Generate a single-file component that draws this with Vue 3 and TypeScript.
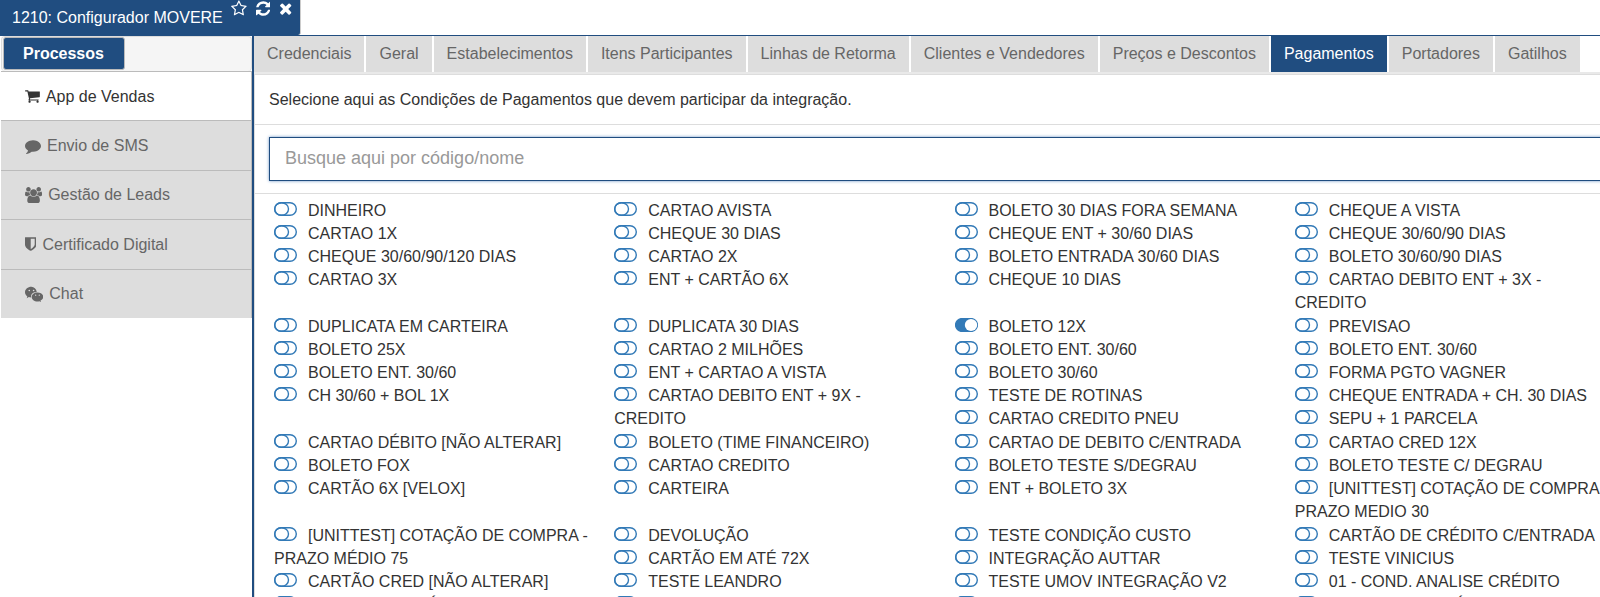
<script setup lang="ts">
import { reactive, ref } from 'vue'

interface Glyph {
  width: number
  path: string
}

interface MenuEntry {
  label: string
  icon: string
}

interface Option {
  name: string
  on: boolean
}

const glyphs: Record<string, Glyph> = {
  star: {
    width: 1664,
    path: 'M1137 532l306 297l-422 62l-189 382l-189 -382l-422 -62l306 -297l-73 -421l378 199l377 -199zM1664 889q0 -22 -26 -48l-363 -354l86 -500q1 -7 1 -20q0 -50 -41 -50q-19 0 -40 12l-449 236l-449 -236q-22 -12 -40 -12q-21 0 -31.5 14.5t-10.5 35.5q0 6 2 20l86 500l-364 354q-25 27 -25 48q0 37 56 46l502 73l225 455q19 41 49 41t49 -41l225 -455l502 -73q56 -9 56 -46z',
  },
  refresh: {
    width: 1536,
    path: 'M1511 480q0 -5 -1 -7q-64 -268 -268 -434.5t-478 -166.5q-146 0 -282.5 55t-243.5 157l-129 -129q-19 -19 -45 -19t-45 19t-19 45v448q0 26 19 45t45 19h448q26 0 45 -19t19 -45t-19 -45l-137 -137q71 -66 161 -102t187 -36q134 0 250 65t186 179q11 17 53 117q8 23 30 23h192q13 0 22.5 -9.5t9.5 -22.5zM1536 1280v-448q0 -26 -19 -45t-45 -19h-448q-26 0 -45 19t-19 45t19 45l138 138q-148 137 -349 137q-134 0 -250 -65t-186 -179q-11 -17 -53 -117q-8 -23 -30 -23h-199q-13 0 -22.5 9.5t-9.5 22.5v7q65 268 270 434.5t480 166.5q146 0 284 -55.5t245 -156.5l130 129q19 19 45 19t45 -19t19 -45z',
  },
  times: {
    width: 1408,
    path: 'M1298 214q0 -40 -28 -68l-136 -136q-28 -28 -68 -28t-68 28l-294 294l-294 -294q-28 -28 -68 -28t-68 28l-136 136q-28 28 -28 68t28 68l294 294l-294 294q-28 28 -28 68t28 68l136 136q28 28 68 28t68 -28l294 -294l294 294q28 28 68 28t68 -28l136 -136q28 -28 28 -68t-28 -68l-294 -294l294 -294q28 -28 28 -68z',
  },
  cart: {
    width: 1664,
    path: 'M640 0q0 -52 -38 -90t-90 -38t-90 38t-38 90t38 90t90 38t90 -38t38 -90zM1536 0q0 -52 -38 -90t-90 -38t-90 38t-38 90t38 90t90 38t90 -38t38 -90zM1664 1088v-512q0 -24 -16.5 -42.5t-40.5 -21.5l-1044 -122q13 -60 13 -70q0 -16 -24 -64h920q26 0 45 -19t19 -45t-19 -45t-45 -19h-1024q-26 0 -45 19t-19 45q0 11 8 31.5t16 36t21.5 40t15.5 29.5l-177 823h-204q-26 0 -45 19t-19 45t19 45t45 19h256q16 0 28.5 -6.5t19.5 -15.5t13 -24.5t8 -26t5.5 -29.5t4.5 -26h1201q26 0 45 -19t19 -45z',
  },
  comment: {
    width: 1792,
    path: 'M1792 640q0 -174 -120 -321.5t-326 -233t-450 -85.5q-70 0 -145 8q-198 -175 -460 -242q-49 -14 -114 -22q-17 -2 -30.5 9t-17.5 29v1q-3 4 -0.5 12t2 10t4.5 9.5l6 9t7 8.5t8 9q7 8 31 34.5t34.5 38t31 39.5t32.5 51t27 59t26 76q-157 89 -247.5 220t-90.5 281q0 130 71 248.5t191 204.5t286 136.5t348 50.5q244 0 450 -85.5t326 -233t120 -321.5z',
  },
  users: {
    width: 1920,
    path: 'M593 640q-162 -5 -265 -128h-134q-82 0 -138 40.5t-56 118.5q0 353 124 353q6 0 43.5 -21t97.5 -42.5t119 -21.5q67 0 133 23q-5 -37 -5 -66q0 -139 81 -256zM1664 3q0 -120 -73 -189.5t-194 -69.5h-874q-121 0 -194 69.5t-73 189.5q0 53 3.5 103.5t14 109t26.5 108.5t43 97.5t62 81t85.5 53.5t111.5 20q10 0 43 -21.5t73 -48t107 -48t135 -21.5t135 21.5t107 48t73 48t43 21.5q61 0 111.5 -20t85.5 -53.5t62 -81t43 -97.5t26.5 -108.5t14 -109t3.5 -103.5zM640 1280q0 -106 -75 -181t-181 -75t-181 75t-75 181t75 181t181 75t181 -75t75 -181zM1344 896q0 -159 -112.5 -271.5t-271.5 -112.5t-271.5 112.5t-112.5 271.5t112.5 271.5t271.5 112.5t271.5 -112.5t112.5 -271.5zM1920 671q0 -78 -56 -118.5t-138 -40.5h-134q-103 123 -265 128q81 117 81 256q0 29 -5 66q66 -23 133 -23q59 0 119 21.5t97.5 42.5t43.5 21q124 0 124 -353zM1792 1280q0 -106 -75 -181t-181 -75t-181 75t-75 181t75 181t181 75t181 -75t75 -181z',
  },
  shield: {
    width: 1280,
    path: 'M1088 576v640h-448v-1137q119 63 213 137q235 184 235 360zM1280 1344v-768q0 -86 -33.5 -170.5t-83 -150t-118 -127.5t-126.5 -103t-121 -77.5t-89.5 -49.5t-42.5 -20q-12 -6 -26 -6t-26 6q-16 7 -42.5 20t-89.5 49.5t-121 77.5t-126.5 103t-118 127.5t-83 150t-33.5 170.5v768q0 26 19 45t45 19h1152q26 0 45 -19t19 -45z',
  },
  chat: {
    width: 2048,
    path: 'M720 1440C320 1440 0 1170 0 830C0 640 100 490 260 370L195 165L425 290Q540 255 690 250Q660 330 680 430C720 690 990 880 1320 870C1260 1200 1010 1440 720 1440zM480 1130a92 92 0 1 0 0 -184a92 92 0 1 0 0 184zM965 1130a92 92 0 1 0 0 -184a92 92 0 1 0 0 184zM1400 810C1030 810 750 590 750 310C750 20 1030 -190 1400 -190Q1510 -190 1605 -160L1790 -256L1740 -97C1930 20 2048 150 2048 310C2048 590 1770 810 1400 810zM1195 575a72 72 0 1 0 0 -144a72 72 0 1 0 0 144zM1600 575a72 72 0 1 0 0 -144a72 72 0 1 0 0 144z',
  },
}

const windowActions = [
  { icon: 'star', label: 'Favoritar' },
  { icon: 'refresh', label: 'Atualizar' },
  { icon: 'times', label: 'Fechar' },
]

const menu: MenuEntry[] = [
  { label: 'App de Vendas', icon: 'cart' },
  { label: 'Envio de SMS', icon: 'comment' },
  { label: 'Gestão de Leads', icon: 'users' },
  { label: 'Certificado Digital', icon: 'shield' },
  { label: 'Chat', icon: 'chat' },
]

const tabs = [
  'Credenciais', 'Geral', 'Estabelecimentos', 'Itens Participantes', 'Linhas de Retorma',
  'Clientes e Vendedores', 'Preços e Descontos', 'Pagamentos', 'Portadores', 'Gatilhos',
]

const activeMenu = ref('App de Vendas')
const activeTab = ref('Pagamentos')
const search = ref('')

const names: string[][] = [
  [
    'DINHEIRO', 'CARTAO AVISTA', 'BOLETO 30 DIAS FORA SEMANA', 'CHEQUE A VISTA',
    'CARTAO 1X', 'CHEQUE 30 DIAS', 'CHEQUE ENT + 30/60 DIAS', 'CHEQUE 30/60/90 DIAS',
    'CHEQUE 30/60/90/120 DIAS', 'CARTAO 2X', 'BOLETO ENTRADA 30/60 DIAS', 'BOLETO 30/60/90 DIAS',
    'CARTAO 3X', 'ENT + CARTÃO 6X', 'CHEQUE 10 DIAS', 'CARTAO DEBITO ENT + 3X - CREDITO',
  ],
  [
    'DUPLICATA EM CARTEIRA', 'DUPLICATA 30 DIAS', 'BOLETO 12X', 'PREVISAO',
    'BOLETO 25X', 'CARTAO 2 MILHÕES', 'BOLETO ENT. 30/60', 'BOLETO ENT. 30/60',
    'BOLETO ENT. 30/60', 'ENT + CARTAO A VISTA', 'BOLETO 30/60', 'FORMA PGTO VAGNER',
    'CH 30/60 + BOL 1X', 'CARTAO DEBITO ENT + 9X - CREDITO', 'TESTE DE ROTINAS', 'CHEQUE ENTRADA + CH. 30 DIAS',
    'CARTAO CREDITO PNEU', 'SEPU + 1 PARCELA',
  ],
  [
    'CARTAO DÉBITO [NÃO ALTERAR]', 'BOLETO (TIME FINANCEIRO)', 'CARTAO DE DEBITO C/ENTRADA', 'CARTAO CRED 12X',
    'BOLETO FOX', 'CARTAO CREDITO', 'BOLETO TESTE S/DEGRAU', 'BOLETO TESTE C/ DEGRAU',
    'CARTÃO 6X [VELOX]', 'CARTEIRA', 'ENT + BOLETO 3X', '[UNITTEST] COTAÇÃO DE COMPRA - PRAZO MEDIO 30',
  ],
  [
    '[UNITTEST] COTAÇÃO DE COMPRA - PRAZO MÉDIO 75', 'DEVOLUÇÃO', 'TESTE CONDIÇÃO CUSTO', 'CARTÃO DE CRÉDITO C/ENTRADA',
    'CARTÃO EM ATÉ 72X', 'INTEGRAÇÃO AUTTAR', 'TESTE VINICIUS',
    'CARTÃO CRED [NÃO ALTERAR]', 'TESTE LEANDRO', 'TESTE UMOV INTEGRAÇÃO V2', '01 - COND. ANALISE CRÉDITO',
    'CARTAO DE CRÉDITO', 'BOLETO 15 DIAS', 'BOLETO 45 DIAS', 'CARTAO 18X CRÉDITO',
  ],
]

const blocks: Option[][] = reactive(
  names.map((block) => block.map((name) => ({ name, on: name === 'BOLETO 12X' }))),
)

const matches = (option: Option): boolean =>
  option.name.toLowerCase().includes(search.value.trim().toLowerCase())
</script>

<template>
  <div class="page">
    <header class="topbar">
      <div class="window-tab">
        <h1 class="window-title">1210: Configurador MOVERE</h1>
        <button v-for="action in windowActions" :key="action.icon" type="button" class="window-action" :aria-label="action.label">
          <svg class="glyph" :viewBox="`0 0 ${glyphs[action.icon].width} 1792`" aria-hidden="true">
            <g transform="translate(0 1536) scale(1 -1)"><path fill-rule="evenodd" :d="glyphs[action.icon].path" /></g>
          </svg>
        </button>
      </div>
    </header>

    <div class="body">
      <aside class="sidebar">
        <div class="sidebar-head">
          <button type="button" class="process-button">Processos</button>
        </div>
        <nav class="menu">
          <button
            v-for="entry in menu"
            :key="entry.label"
            type="button"
            class="menu-item"
            :class="{ active: entry.label === activeMenu }"
            @click="activeMenu = entry.label"
          >
            <svg class="glyph" :viewBox="`0 0 ${glyphs[entry.icon].width} 1792`" aria-hidden="true">
              <g transform="translate(0 1536) scale(1 -1)"><path fill-rule="evenodd" :d="glyphs[entry.icon].path" /></g>
            </svg>
            <span>{{ entry.label }}</span>
          </button>
        </nav>
      </aside>

      <main class="main">
        <div class="tabs" role="tablist">
          <button
            v-for="tab in tabs"
            :key="tab"
            type="button"
            role="tab"
            class="tab"
            :class="{ active: tab === activeTab }"
            :aria-selected="tab === activeTab"
            @click="activeTab = tab"
          >{{ tab }}</button>
        </div>

        <section class="panel">
          <p class="intro">Selecione aqui as Condições de Pagamentos que devem participar da integração.</p>
          <div class="search-row">
            <input v-model="search" class="search" type="text" placeholder="Busque aqui por código/nome" aria-label="Busque aqui por código/nome" />
          </div>
          <div class="options">
            <div v-for="(block, b) in blocks" :key="b" class="block">
              <template v-for="(option, i) in block" :key="i">
                <label v-if="matches(option)" class="option">
                  <input v-model="option.on" type="checkbox" class="check" />
                  <svg class="toggle" viewBox="0 0 23 14" aria-hidden="true">
                    <template v-if="option.on">
                      <rect x="0.6" y="0.6" width="21.8" height="12.8" rx="6.4" fill="#337ab7" />
                      <ellipse cx="16" cy="7" rx="6.2" ry="6" fill="#fff" stroke="none" />
                    </template>
                    <template v-else>
                      <rect x="0.7" y="0.7" width="21.6" height="12.6" rx="6.3" />
                      <ellipse cx="7.6" cy="7" rx="6.9" ry="6.3" />
                    </template>
                  </svg>{{ option.name }}
                </label>
              </template>
            </div>
          </div>
        </section>
      </main>
    </div>
  </div>
</template>

<style>
body {
  margin: 0;
  background: #fff;
}
</style>

<style scoped>
.page,
.page * {
  box-sizing: border-box;
}

.page {
  display: flex;
  flex-direction: column;
  height: 100vh;
  overflow: hidden;
  color: #333;
  font-family: "Liberation Sans", Arial, sans-serif;
  font-size: 16px;
  line-height: 23px;
}

button {
  margin: 0;
  padding: 0;
  border: 0;
  background: none;
  color: inherit;
  font: inherit;
  cursor: pointer;
}

.glyph {
  display: block;
  height: 16px;
  fill: currentColor;
}

.topbar {
  display: flex;
  flex: none;
  border-bottom: 1px solid #204d80;
}

.window-tab {
  display: flex;
  align-items: flex-start;
  height: 35px;
  padding: 0 8px 0 12px;
  border-right: 1px solid #ccc;
  border-bottom-right-radius: 3px;
  background: #204d80;
  color: #fff;
}

.window-title {
  margin: 6px 8px 0 0;
  font-size: 16px;
  font-weight: 400;
  white-space: nowrap;
}

.window-action .glyph {
  height: 17px;
}

.window-action + .window-action {
  margin-left: 9px;
}

.body {
  display: flex;
  flex: 1;
  min-height: 0;
}

.sidebar {
  flex: none;
  width: 254px;
  padding-left: 1px;
  border-right: 2px solid #204d80;
}

.sidebar-head {
  height: 35px;
  padding: 0 1px;
  border: 1px solid #ddd;
  border-bottom: 0;
  border-radius: 4px;
  background: #f5f5f5;
}

.process-button {
  height: 33px;
  padding: 0 20px 0 19px;
  border: 1px solid #bbb;
  border-radius: 3px;
  background: #204d80;
  color: #fff;
  font-weight: 700;
}

.menu {
  display: grid;
  grid-auto-rows: 1fr;
  height: 247px;
}

.menu-item {
  display: flex;
  align-items: center;
  gap: 6px;
  padding-left: 24px;
  border-top: 1px solid #bbb;
  border-right: 1px solid #bbb;
  background: #ddd;
  color: #666;
}

.menu-item.active {
  background: #fff;
  color: #333;
}

.main {
  flex: 1;
  min-width: 0;
}

.tabs {
  display: flex;
  gap: 2px;
  border-bottom: 2px solid #e9e9e9;
}

.tab {
  flex: none;
  height: 36px;
  padding: 0 13px 2px;
  background: #ddd;
  color: #666;
  white-space: nowrap;
}

.tab.active {
  background: #204d80;
  color: #fff;
}

.panel {
  margin-right: -26px;
  border: 1px solid #ddd;
}

.intro {
  margin: 0;
  padding: 13px 14px;
  border-bottom: 1px solid #ddd;
}

.search-row {
  padding: 12px 14px;
  border-bottom: 1px solid #ddd;
}

.search {
  display: block;
  width: 100%;
  height: 44px;
  padding: 0 15px 2px;
  border: 1px solid #204d80;
  border-radius: 0;
  outline: 0;
  background: #fff;
  box-shadow: 0 0 3px #6c94c4;
  color: #333;
  font-family: inherit;
  font-size: 18px;
}

.search::placeholder {
  color: #999;
  opacity: 1;
}

.options {
  padding: 5px 0 0 9px;
}

.block {
  display: flow-root;
  margin-bottom: 1px;
}

/* Floated quarters: a wrapped name pushes the following entries to its right. */
.option {
  position: relative;
  float: left;
  width: 25%;
  min-height: 23px;
  padding: 0 10px;
  cursor: pointer;
}

.check {
  position: absolute;
  width: 23px;
  height: 14px;
  margin: 3px 0 0;
  opacity: 0;
}

.toggle {
  width: 23px;
  height: 14px;
  margin-right: 11px;
  fill: none;
  stroke: #337ab7;
  stroke-width: 1.4;
}
</style>
